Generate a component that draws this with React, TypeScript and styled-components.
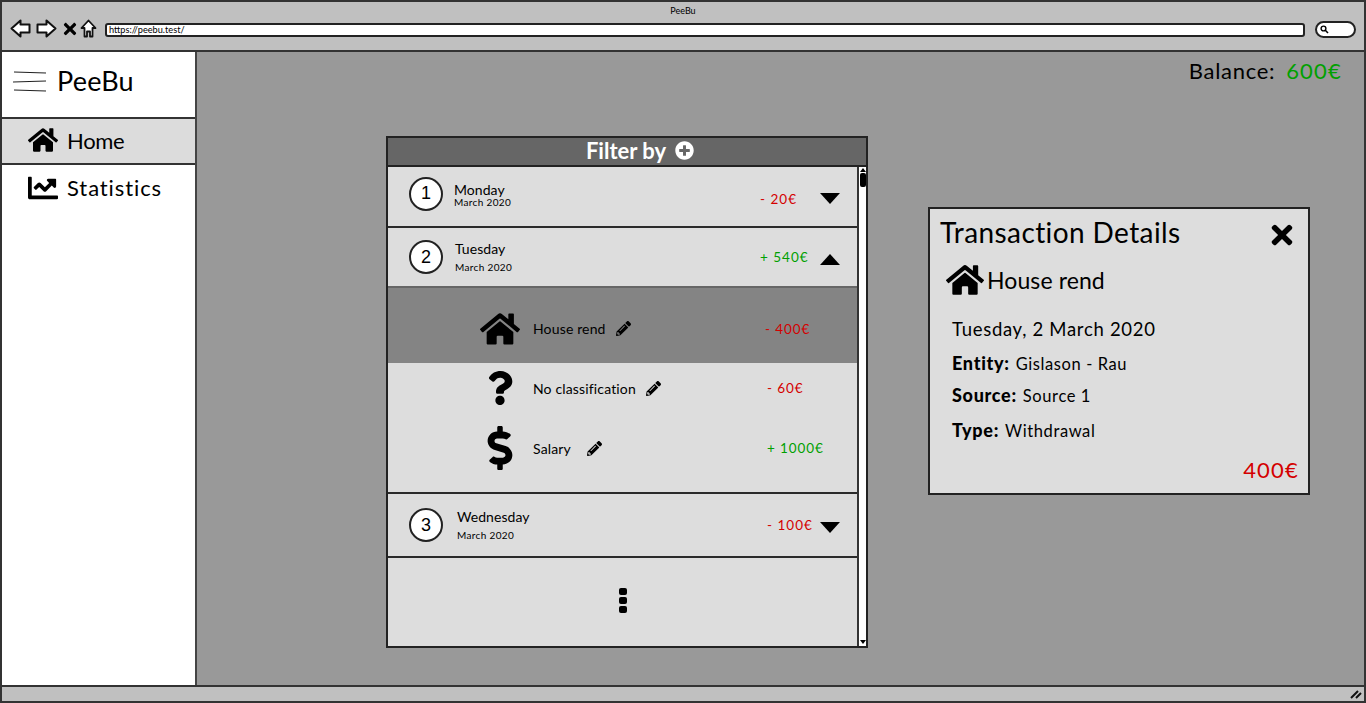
import React from "react";
import styled, { createGlobalStyle } from "styled-components";
import {
  FaChartLine,
  FaDollarSign,
  FaHome,
  FaPencilAlt,
  FaPlusCircle,
  FaQuestion,
  FaTimes,
} from "react-icons/fa";

const FONT = `"Lato", "Noto Sans", sans-serif`;
const RED = "#d40000";
const GREEN = "#00a000";

const GlobalStyle = createGlobalStyle`
  html, body {
    margin: 0;
    padding: 0;
    height: 100%;
    overflow: hidden;
    background: #fff;
  }
  * {
    box-sizing: border-box;
  }
`;

const Window = styled.div`
  width: 1366px;
  height: 703px;
  display: flex;
  flex-direction: column;
  border: 2px solid #333;
  font-family: ${FONT};
  color: #000;
  overflow: hidden;
`;

const BrowserBar = styled.header`
  height: 50px;
  flex: none;
  background: #c0c0c0;
  border-bottom: 2px solid #333;
  display: flex;
  flex-direction: column;
`;

const WindowTitle = styled.div`
  height: 16px;
  padding-top: 2px;
  text-align: center;
  font-size: 9px;
  line-height: 13px;
`;

const BrowserTools = styled.div`
  display: flex;
  align-items: center;
  padding: 0 8px 0 8px;
  margin-top: 1px;
`;

const NavButtons = styled.div`
  display: flex;
  align-items: center;
  gap: 5px;
  margin-right: 8px;
`;

const CloseGlyph = styled.span`
  display: flex;
  font-size: 18px;
  margin: 0 -4px 0 -1px;
`;

const UrlField = styled.div`
  flex: 1;
  height: 14px;
  background: #fff;
  border: 2px solid #222;
  border-radius: 3px;
  font-size: 9.2px;
  line-height: 10px;
  padding-left: 2px;
  margin-top: 3px;
`;

const SearchField = styled.div`
  width: 41px;
  height: 17px;
  margin-left: 10px;
  margin-top: 2px;
  background: #fff;
  border: 2px solid #222;
  border-radius: 9px;
  display: flex;
  align-items: center;
  padding-left: 3px;
`;

const Body = styled.div`
  flex: 1;
  display: flex;
  min-height: 0;
`;

const Sidebar = styled.nav`
  width: 195px;
  flex: none;
  background: #fff;
  border-right: 2px solid #444;
  display: flex;
  flex-direction: column;
`;

const Brand = styled.div`
  height: 67px;
  flex: none;
  display: flex;
  align-items: flex-start;
  padding: 15px 0 0 11px;
  gap: 10px;
  font-size: 27px;
  line-height: 27px;
  letter-spacing: 0.2px;
  border-bottom: 2px solid #333;

  svg {
    margin-top: 3px;
  }
`;

const NavItem = styled.div<{ $active?: boolean; $spacing: number }>`
  height: ${({ $active }) => ($active ? "46px" : "47px")};
  flex: none;
  display: flex;
  align-items: center;
  gap: 8px;
  padding: 0 0 2px 25px;
  font-size: 22px;
  letter-spacing: ${({ $spacing }) => $spacing}px;
  background: ${({ $active }) => ($active ? "#dcdcdc" : "#fff")};
  border-bottom: ${({ $active }) => ($active ? "2px solid #333" : "0")};
`;

const NavIcon = styled.span`
  width: 32px;
  display: flex;
  justify-content: center;
  font-size: 30px;
`;

const Main = styled.main`
  flex: 1;
  background: #999;
  display: flex;
  flex-direction: column;
`;

const BalanceRow = styled.div`
  height: 84px;
  flex: none;
  display: flex;
  justify-content: flex-end;
  gap: 11px;
  padding: 6px 22px 0 0;
  font-size: 22px;
  line-height: 26px;
  letter-spacing: 0.7px;
`;

const Money = styled.span<{ $color: string }>`
  color: ${({ $color }) => $color};
  letter-spacing: 1.2px;
`;

const Content = styled.div`
  display: flex;
  align-items: flex-start;
  padding-left: 189px;
  gap: 60px;
`;

const ListPanel = styled.section`
  width: 482px;
  height: 512px;
  flex: none;
  display: flex;
  flex-direction: column;
  border: 2px solid #222;
  background: #ddd;
`;

const FilterBar = styled.div`
  height: 29px;
  flex: none;
  background: #666;
  border-bottom: 2px solid #222;
  color: #fff;
  display: flex;
  align-items: center;
  justify-content: center;
  gap: 9px;
  padding: 0 0 2px 26px;
  font-size: 22px;
  font-weight: 700;
  letter-spacing: 0;
`;

const ListBody = styled.div`
  flex: 1;
  display: flex;
  min-height: 0;
`;

const Rows = styled.div`
  flex: 1;
  display: flex;
  flex-direction: column;
`;

const Scrollbar = styled.div`
  width: 9px;
  flex: none;
  background: #fff;
  border-left: 2px solid #333;
  display: flex;
  flex-direction: column;
  align-items: center;
  justify-content: space-between;
`;

const ScrollTop = styled.div`
  display: flex;
  flex-direction: column;
  align-items: center;
  gap: 1px;
  padding-top: 1px;
`;

const ScrollThumb = styled.div`
  width: 6px;
  height: 14px;
  background: #000;
  border-radius: 2px;
`;

const ArrowUp = styled.div`
  width: 0;
  height: 0;
  border-left: 3px solid transparent;
  border-right: 3px solid transparent;
  border-bottom: 4px solid #000;
`;

const ArrowDown = styled.div`
  width: 0;
  height: 0;
  margin-bottom: 2px;
  border-left: 3px solid transparent;
  border-right: 3px solid transparent;
  border-top: 4px solid #000;
`;

const DayRow = styled.div<{ $height: number; $thick?: boolean }>`
  height: ${({ $height }) => $height}px;
  flex: none;
  display: flex;
  align-items: center;
  padding-left: 21px;
  border-bottom: 2px solid ${({ $thick }) => ($thick ? "#666" : "#2a2a2a")};
`;

const DayCircle = styled.div<{ $lift?: number }>`
  width: 34px;
  height: 34px;
  flex: none;
  margin-bottom: ${({ $lift }) => $lift ?? 0}px;
  border: 2px solid #222;
  border-radius: 50%;
  background: #fff;
  display: flex;
  align-items: center;
  justify-content: center;
  font-size: 18px;
  font-family: "Liberation Sans", sans-serif;
`;

const DayText = styled.div<{ $gap: number; $indent: number; $width: number; $lift?: number }>`
  width: ${({ $width }) => $width}px;
  margin-left: ${({ $indent }) => $indent}px;
  margin-bottom: ${({ $lift }) => $lift ?? 0}px;
  display: flex;
  flex-direction: column;
  gap: ${({ $gap }) => $gap}px;
`;

const DayName = styled.div`
  font-size: 14px;
  line-height: 15px;
  letter-spacing: 0.05px;
`;

const DayMonth = styled.div`
  font-size: 10px;
  line-height: 11px;
  letter-spacing: 0.35px;
`;

const DayAmount = styled.div<{ $color: string; $width: number; $drop?: number }>`
  width: ${({ $width }) => $width}px;
  flex: none;
  margin-top: ${({ $drop }) => $drop ?? 0}px;
  color: ${({ $color }) => $color};
  font-size: 13.5px;
  letter-spacing: 1px;
  white-space: nowrap;
`;

const Caret = styled.div<{ $up?: boolean; $drop: number }>`
  width: 0;
  height: 0;
  margin-top: ${({ $drop }) => $drop}px;
  border-left: 10px solid transparent;
  border-right: 10px solid transparent;
  ${({ $up }) =>
    $up ? "border-bottom: 11px solid #000;" : "border-top: 11px solid #000;"}
`;

const SelectedEntry = styled.div`
  height: 75px;
  flex: none;
  padding-top: 6px;
  background: #848484;
  display: flex;
  align-items: center;
`;

const Entries = styled.div`
  height: 131px;
  flex: none;
  display: flex;
  flex-direction: column;
  border-bottom: 2px solid #2a2a2a;
`;

const EntryRow = styled.div<{ $height: number }>`
  height: ${({ $height }) => $height}px;
  flex: none;
  display: flex;
  align-items: center;
`;

const EntryIcon = styled.div<{ $size: number }>`
  width: 145px;
  padding-left: 78px;
  flex: none;
  display: flex;
  justify-content: center;
  font-size: ${({ $size }) => $size}px;
`;

const EntryName = styled.div<{ $width: number; $gap: number }>`
  width: ${({ $width }) => $width}px;
  flex: none;
  display: flex;
  align-items: center;
  gap: ${({ $gap }) => $gap}px;
  font-size: 14px;
  letter-spacing: 0.15px;
  white-space: nowrap;
`;

const EntryAmount = styled.div<{ $color: string }>`
  color: ${({ $color }) => $color};
  font-size: 13.5px;
  letter-spacing: 0.9px;
  white-space: nowrap;
`;

const MoreRow = styled.div`
  flex: 1;
  display: flex;
  flex-direction: column;
  align-items: center;
  justify-content: center;
  gap: 2px;
  padding-bottom: 4px;
`;

const MoreDot = styled.div`
  width: 8px;
  height: 7px;
  background: #000;
  border-radius: 2px;
`;

const DetailCard = styled.aside`
  width: 382px;
  height: 288px;
  flex: none;
  margin-top: 71px;
  background: #ddd;
  border: 2px solid #222;
  display: flex;
  flex-direction: column;
  padding: 4px 9px 0 10px;
`;

const DetailHead = styled.div`
  display: flex;
  justify-content: space-between;
  align-items: center;
  font-size: 28px;
  line-height: 36px;
  letter-spacing: 0.4px;
`;

const DetailClose = styled.span`
  display: flex;
  font-size: 30px;
  margin-top: 7px;
  margin-right: 2px;
`;

const DetailCategory = styled.div`
  display: flex;
  align-items: center;
  gap: 3px;
  margin: 11px 0 0 6px;
  font-size: 23px;
  line-height: 34px;
  letter-spacing: 0.1px;
`;

const DetailLines = styled.div`
  display: flex;
  flex-direction: column;
  padding-left: 12px;
  margin-top: 14px;
`;

const DetailDate = styled.div`
  font-size: 18.5px;
  line-height: 32px;
  letter-spacing: 0.7px;
`;

const DetailLine = styled.div<{ $top: number }>`
  margin-top: ${({ $top }) => $top}px;
  display: flex;
  align-items: baseline;
  gap: 6px;
  font-size: 16.5px;
  line-height: 24px;
  letter-spacing: 0.6px;

  b {
    font-size: 18px;
    font-weight: 900;
    letter-spacing: 0.7px;
  }
`;

const DetailAmount = styled.div`
  margin-top: auto;
  padding-bottom: 10px;
  text-align: right;
  color: ${RED};
  font-size: 22px;
  line-height: 26px;
  letter-spacing: 1.2px;
`;

const StatusBar = styled.footer`
  height: 16px;
  flex: none;
  background: #c0c0c0;
  border-top: 2px solid #333;
  display: flex;
  justify-content: flex-end;
  align-items: center;
  padding-right: 2px;
`;

const OutlineArrow = ({ flip }: { flip?: boolean }) => (
  <svg
    width="21"
    height="19"
    viewBox="0 0 21 19"
    style={flip ? { transform: "scaleX(-1)" } : undefined}
  >
    <path
      d="M1.5 9.5 L10.5 1.5 V5.5 H19.5 V13.5 H10.5 V17.5 Z"
      fill="#fff"
      stroke="#111"
      strokeWidth="2"
      strokeLinejoin="round"
    />
  </svg>
);

const OutlineHome = () => (
  <svg width="17" height="19" viewBox="0 0 17 19">
    <path
      d="M8.5 1.5 L15.5 9 H12.5 V17.5 H10 V12.5 H7 V17.5 H4.5 V9 H1.5 Z"
      fill="#fff"
      stroke="#111"
      strokeWidth="1.8"
      strokeLinejoin="round"
    />
  </svg>
);

const MenuLines = () => (
  <svg width="34" height="22" viewBox="0 0 34 22">
    <path
      d="M1 2 L33 3 M0 12 L33 11 M1 20 L33 21"
      stroke="#222"
      strokeWidth="1.2"
      fill="none"
    />
  </svg>
);

const TinySearch = () => (
  <svg width="9" height="9" viewBox="0 0 9 9">
    <circle cx="3.5" cy="3.5" r="2.4" fill="none" stroke="#000" strokeWidth="1.4" />
    <path d="M5.3 5.3 L8 8" stroke="#000" strokeWidth="1.6" />
  </svg>
);

const Grip = () => (
  <svg width="12" height="10" viewBox="0 0 12 10">
    <path d="M1 9 L8 2 M6 9 L11 4" stroke="#111" strokeWidth="2" />
  </svg>
);

const entries = [
  { name: "No classification", color: RED, amount: "- 60€", icon: <FaQuestion />, size: 34, height: 50, gap: 10 },
  { name: "Salary", color: GREEN, amount: "+ 1000€", icon: <FaDollarSign />, size: 44, height: 70, gap: 16 },
];

export default function App() {
  return (
    <>
      <GlobalStyle />
      <Window>
        <BrowserBar>
          <WindowTitle>PeeBu</WindowTitle>
          <BrowserTools>
            <NavButtons>
              <OutlineArrow />
              <OutlineArrow flip />
              <CloseGlyph>
                <FaTimes />
              </CloseGlyph>
              <OutlineHome />
            </NavButtons>
            <UrlField>https://peebu.test/</UrlField>
            <SearchField>
              <TinySearch />
            </SearchField>
          </BrowserTools>
        </BrowserBar>
        <Body>
          <Sidebar>
            <Brand>
              <MenuLines />
              PeeBu
            </Brand>
            <NavItem $active $spacing={-0.3}>
              <NavIcon>
                <FaHome />
              </NavIcon>
              Home
            </NavItem>
            <NavItem $spacing={0.9}>
              <NavIcon>
                <FaChartLine />
              </NavIcon>
              Statistics
            </NavItem>
          </Sidebar>
          <Main>
            <BalanceRow>
              Balance:
              <Money $color={GREEN}>600€</Money>
            </BalanceRow>
            <Content>
              <ListPanel>
                <FilterBar>
                  Filter by
                  <FaPlusCircle size={19} />
                </FilterBar>
                <ListBody>
                  <Rows>
                    <DayRow $height={61}>
                      <DayCircle $lift={6}>1</DayCircle>
                      <DayText $gap={0} $indent={11} $width={306} $lift={3}>
                        <DayName>Monday</DayName>
                        <DayMonth>March 2020</DayMonth>
                      </DayText>
                      <DayAmount $color={RED} $width={60} $drop={4}>- 20€</DayAmount>
                      <Caret $drop={3} />
                    </DayRow>
                    <DayRow $height={60} $thick>
                      <DayCircle>2</DayCircle>
                      <DayText $gap={6} $indent={12} $width={305}>
                        <DayName>Tuesday</DayName>
                        <DayMonth>March 2020</DayMonth>
                      </DayText>
                      <DayAmount $color={GREEN} $width={60}>+ 540€</DayAmount>
                      <Caret $up $drop={4} />
                    </DayRow>
                    <SelectedEntry>
                      <EntryIcon $size={40}>
                        <FaHome />
                      </EntryIcon>
                      <EntryName $width={232} $gap={10}>
                        House rend
                        <FaPencilAlt size={15} />
                      </EntryName>
                      <EntryAmount $color={RED}>- 400€</EntryAmount>
                    </SelectedEntry>
                    <Entries>
                      {entries.map((entry) => (
                        <EntryRow key={entry.name} $height={entry.height}>
                          <EntryIcon $size={entry.size}>{entry.icon}</EntryIcon>
                          <EntryName $width={234} $gap={entry.gap}>
                            {entry.name}
                            <FaPencilAlt size={15} />
                          </EntryName>
                          <EntryAmount $color={entry.color}>{entry.amount}</EntryAmount>
                        </EntryRow>
                      ))}
                    </Entries>
                    <DayRow $height={64}>
                      <DayCircle>3</DayCircle>
                      <DayText $gap={6} $indent={14} $width={310}>
                        <DayName>Wednesday</DayName>
                        <DayMonth>March 2020</DayMonth>
                      </DayText>
                      <DayAmount $color={RED} $width={53}>- 100€</DayAmount>
                      <Caret $drop={4} />
                    </DayRow>
                    <MoreRow>
                      <MoreDot />
                      <MoreDot />
                      <MoreDot />
                    </MoreRow>
                  </Rows>
                  <Scrollbar>
                    <ScrollTop>
                      <ArrowUp />
                      <ScrollThumb />
                    </ScrollTop>
                    <ArrowDown />
                  </Scrollbar>
                </ListBody>
              </ListPanel>
              <DetailCard>
                <DetailHead>
                  Transaction Details
                  <DetailClose>
                    <FaTimes />
                  </DetailClose>
                </DetailHead>
                <DetailCategory>
                  <FaHome size={38} />
                  House rend
                </DetailCategory>
                <DetailLines>
                  <DetailDate>Tuesday, 2 March 2020</DetailDate>
                  <DetailLine $top={6}>
                    <b>Entity:</b> Gislason - Rau
                  </DetailLine>
                  <DetailLine $top={7}>
                    <b>Source:</b> Source 1
                  </DetailLine>
                  <DetailLine $top={10}>
                    <b>Type:</b> Withdrawal
                  </DetailLine>
                </DetailLines>
                <DetailAmount>400€</DetailAmount>
              </DetailCard>
            </Content>
          </Main>
        </Body>
        <StatusBar>
          <Grip />
        </StatusBar>
      </Window>
    </>
  );
}
